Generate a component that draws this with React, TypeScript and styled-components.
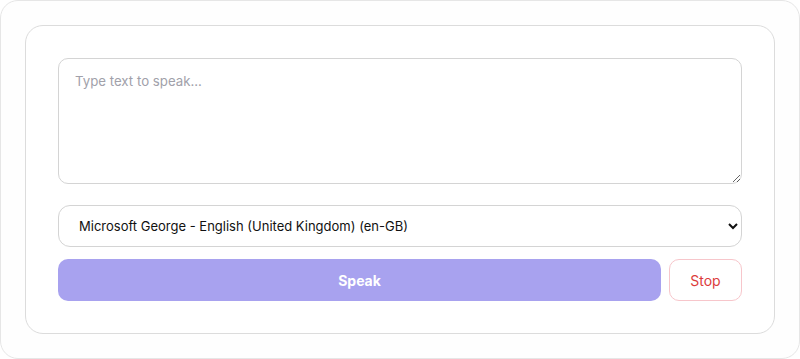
import React, { useState } from "react"
import styled, { createGlobalStyle } from "styled-components"

const GlobalStyle = createGlobalStyle`
    html, body {
        margin: 0;
        padding: 0;
        background: #ffffff;
        font-family: Inter, "Liberation Sans", sans-serif;
    }
    * {
        box-sizing: border-box;
    }
`

const Shell = styled.div`
    width: 800px;
    height: 359px;
    padding: 24px;
    border: 1px solid #e6e6e6;
    border-radius: 18px;
    background: #fefefe;
`

const Card = styled.div`
    display: flex;
    flex-direction: column;
    height: 100%;
    padding: 32px;
    border: 1px solid #dcdcdc;
    border-radius: 18px;
    background: #ffffff;
`

const TextArea = styled.textarea`
    width: 100%;
    height: 126px;
    padding: 14px 16px;
    border: 1px solid #d4d4d4;
    border-radius: 10px;
    font-family: Inter, "Liberation Sans", sans-serif;
    font-size: 13.25px;
    color: #222;
    resize: vertical;
    outline: none;
    &::placeholder {
        color: #a1a1aa;
    }
`

const VoiceSelect = styled.select`
    margin-top: 21px;
    width: 100%;
    height: 42px;
    padding: 0 14px 0 16px;
    border: 1px solid #d4d4d4;
    border-radius: 12px;
    background: #ffffff;
    font-family: Inter, "Liberation Sans", sans-serif;
    font-size: 13px;
    color: #111;
    outline: none;
`

const ButtonRow = styled.div`
    display: flex;
    gap: 8px;
    margin-top: 12px;
`

const SpeakButton = styled.button`
    flex: 1;
    height: 42px;
    border: none;
    border-radius: 10px;
    background: #a8a2ef;
    color: #ffffff;
    font-family: Inter, "Liberation Sans", sans-serif;
    font-size: 14px;
    font-weight: 700;
`

const StopButton = styled.button`
    width: 73px;
    height: 42px;
    border: 1px solid #f7c6cb;
    border-radius: 10px;
    background: #ffffff;
    color: #dc3c3c;
    font-family: Inter, "Liberation Sans", sans-serif;
    font-size: 14px;
`

export default function App() {
    const [text, setText] = useState("")
    return (
        <>
            <GlobalStyle />
            <Shell>
                <Card>
                    <TextArea
                        placeholder="Type text to speak..."
                        value={text}
                        onChange={e => setText(e.target.value)}
                    />
                    <VoiceSelect defaultValue="george">
                        <option value="george">Microsoft George - English (United Kingdom) (en-GB)</option>
                    </VoiceSelect>
                    <ButtonRow>
                        <SpeakButton>Speak</SpeakButton>
                        <StopButton>Stop</StopButton>
                    </ButtonRow>
                </Card>
            </Shell>
        </>
    )
}
